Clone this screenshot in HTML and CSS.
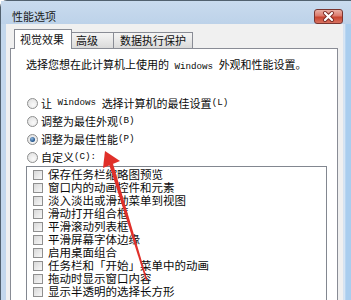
FILE: index.html
```html
<!DOCTYPE html>
<html lang="zh-CN">
<head>
  <meta charset="UTF-8">
  <title>性能选项</title>
  <link rel="stylesheet" href="styles.css">
</head>
<body>

<div class="window">
  <div class="titlebar">
    <span class="title">性能选项</span>
    <button class="close">
      <svg width="27" height="13" viewBox="0 0 27 13">
        <path d="M10 3 L17 10 M17 3 L10 10" stroke="#7a2a24" stroke-width="4" stroke-linecap="round"/>
        <path d="M10 3 L17 10 M17 3 L10 10" stroke="#ffffff" stroke-width="2.2" stroke-linecap="round"/>
      </svg>
    </button>
  </div>

  <div class="client">
    <div class="tabs">
      <div class="tab active">视觉效果</div>
      <div class="tab tab-adv">高级</div>
      <div class="tab tab-dep">数据执行保护</div>
    </div>

    <div class="panel">
      <p class="intro">选择您想在此计算机上使用的<span class="latin"> Windows </span>外观和性能设置。</p>

      <div class="radios">
        <div class="radio"><span class="circle"></span>让<span class="latin"> Windows </span>选择计算机的最佳设置<span class="latin">(L)</span></div>
        <div class="radio"><span class="circle"></span>调整为最佳外观<span class="latin">(B)</span></div>
        <div class="radio"><span class="circle checked"></span>调整为最佳性能<span class="latin">(P)</span></div>
        <div class="radio"><span class="circle"></span>自定义<span class="latin">(C):</span></div>
      </div>

      <div class="listbox">
        <div class="item"><span class="check"></span>保存任务栏缩略图预览</div>
        <div class="item"><span class="check"></span>窗口内的动画控件和元素</div>
        <div class="item"><span class="check"></span>淡入淡出或滑动菜单到视图</div>
        <div class="item"><span class="check"></span>滑动打开组合框</div>
        <div class="item"><span class="check"></span>平滑滚动列表框</div>
        <div class="item"><span class="check"></span>平滑屏幕字体边缘</div>
        <div class="item"><span class="check"></span>启用桌面组合</div>
        <div class="item"><span class="check"></span>任务栏和「开始」菜单中的动画</div>
        <div class="item"><span class="check"></span>拖动时显示窗口内容</div>
        <div class="item"><span class="check"></span>显示半透明的选择长方形</div>
      </div>
    </div>
  </div>
</div>

<!-- red pointer drawn over the screenshot -->
<svg class="arrow" width="351" height="300" viewBox="0 0 351 300">
  <polygon points="109.1,164.6 112.9,163.4 147.3,279.8 145.8,280.3" fill="#e0302a"/>
  <polygon points="105,151 103,168 120,161" fill="#e0302a"/>
</svg>

</body>
</html>
```

FILE: styles.css
```css
body {
  margin: 0;
  position: relative;
  width: 351px;
  height: 300px;
  overflow: hidden;
  font-family: "Noto Sans CJK SC", "Noto Sans", sans-serif;
  font-size: 11px;
  color: #0a0a0a;
}
.window {
  box-sizing: border-box;
  width: 351px;
  height: 300px;
  display: flex;
  flex-direction: column;
  border-top: 1px solid #52616f;
  border-left: 1px solid #52616f;
  border-top-left-radius: 7px;
  background: linear-gradient(to right, #c3d7ec 0, #c3d7ec 342px, #e6edf6 343px, #a9cdee 345px);
}
.titlebar {
  height: 27px;
  display: flex;
  align-items: flex-start;
  justify-content: space-between;
  background: linear-gradient(#c9dbee, #bdd2e9);
}
.title {
  padding: 7px 0 0 11px;
  line-height: 16px;
  color: #1a1a1a;
}
.close {
  box-sizing: border-box;
  width: 29px;
  height: 15px;
  margin: 8px 8px 0 0;
  padding: 0;
  border: 1px solid #7a3530;
  border-radius: 3px;
  background: linear-gradient(#eab0a5, #dc7a6c 45%, #c8442f 55%, #d87261);
  display: flex;
  align-items: center;
  justify-content: center;
}
.client {
  flex: 1;
  margin: 0 8px 0 5px;
  padding: 5px 5px 0 4px;
  background: #f0f0f0;
  display: flex;
  flex-direction: column;
}
.tabs {
  display: flex;
  align-items: flex-end;
  height: 19px;
  padding-left: 4px;
}
.tab {
  box-sizing: border-box;
  height: 16px;
  line-height: 15px;
  border: 1px solid #898c95;
  border-bottom: none;
  background: linear-gradient(#f4f4f4, #e8e8e8 50%, #dadada);
  color: #111;
}
.tab.active {
  position: relative;
  z-index: 1;
  width: 58px;
  height: 20px;
  line-height: 19px;
  margin-bottom: -1px;
  padding-left: 5px;
  background: #fff;
}
.tab-adv {
  width: 42px;
  padding-left: 4px;
  border-left: none;
}
.tab-dep {
  width: 79px;
  padding-left: 6px;
  border-left: none;
}
.panel {
  flex: 1;
  background: #fff;
  border: 1px solid #898c95;
  border-bottom: none;
  padding: 0 10px 0 15px;
}
.intro {
  margin: 8px 0 0;
  line-height: 14px;
}
.latin {
  font-family: "Liberation Mono", monospace;
  font-size: 9.2px;
  white-space: pre;
}
.radios {
  margin-top: 20px;
}
.radio {
  height: 18px;
  line-height: 18px;
  display: flex;
  align-items: center;
}
.circle {
  box-sizing: border-box;
  width: 11px;
  height: 11px;
  margin: 0 3px 0 1px;
  border: 1px solid #8e8f8f;
  border-radius: 50%;
  background: radial-gradient(circle at 60% 65%, #fafafa, #dcdcdc);
  display: flex;
  align-items: center;
  justify-content: center;
}
.circle.checked::after {
  content: "";
  width: 5px;
  height: 5px;
  border-radius: 50%;
  background: radial-gradient(circle at 40% 35%, #8fb8e0, #1d4f86 70%);
}
.listbox {
  border: 1px solid #828790;
  border-bottom: none;
  padding: 1px 0 0 6px;
  height: 140px;
  font-size: 11.5px;
}
.item {
  height: 13px;
  line-height: 13px;
  display: flex;
  align-items: center;
  white-space: nowrap;
}
.check {
  box-sizing: border-box;
  width: 10px;
  height: 10px;
  margin-right: 5px;
  border: 1px solid #8f8f8f;
  background: linear-gradient(135deg, #d8d8d8, #f8f8f8);
}
.arrow {
  position: absolute;
  top: 0;
  left: 0;
  pointer-events: none;
}
```
